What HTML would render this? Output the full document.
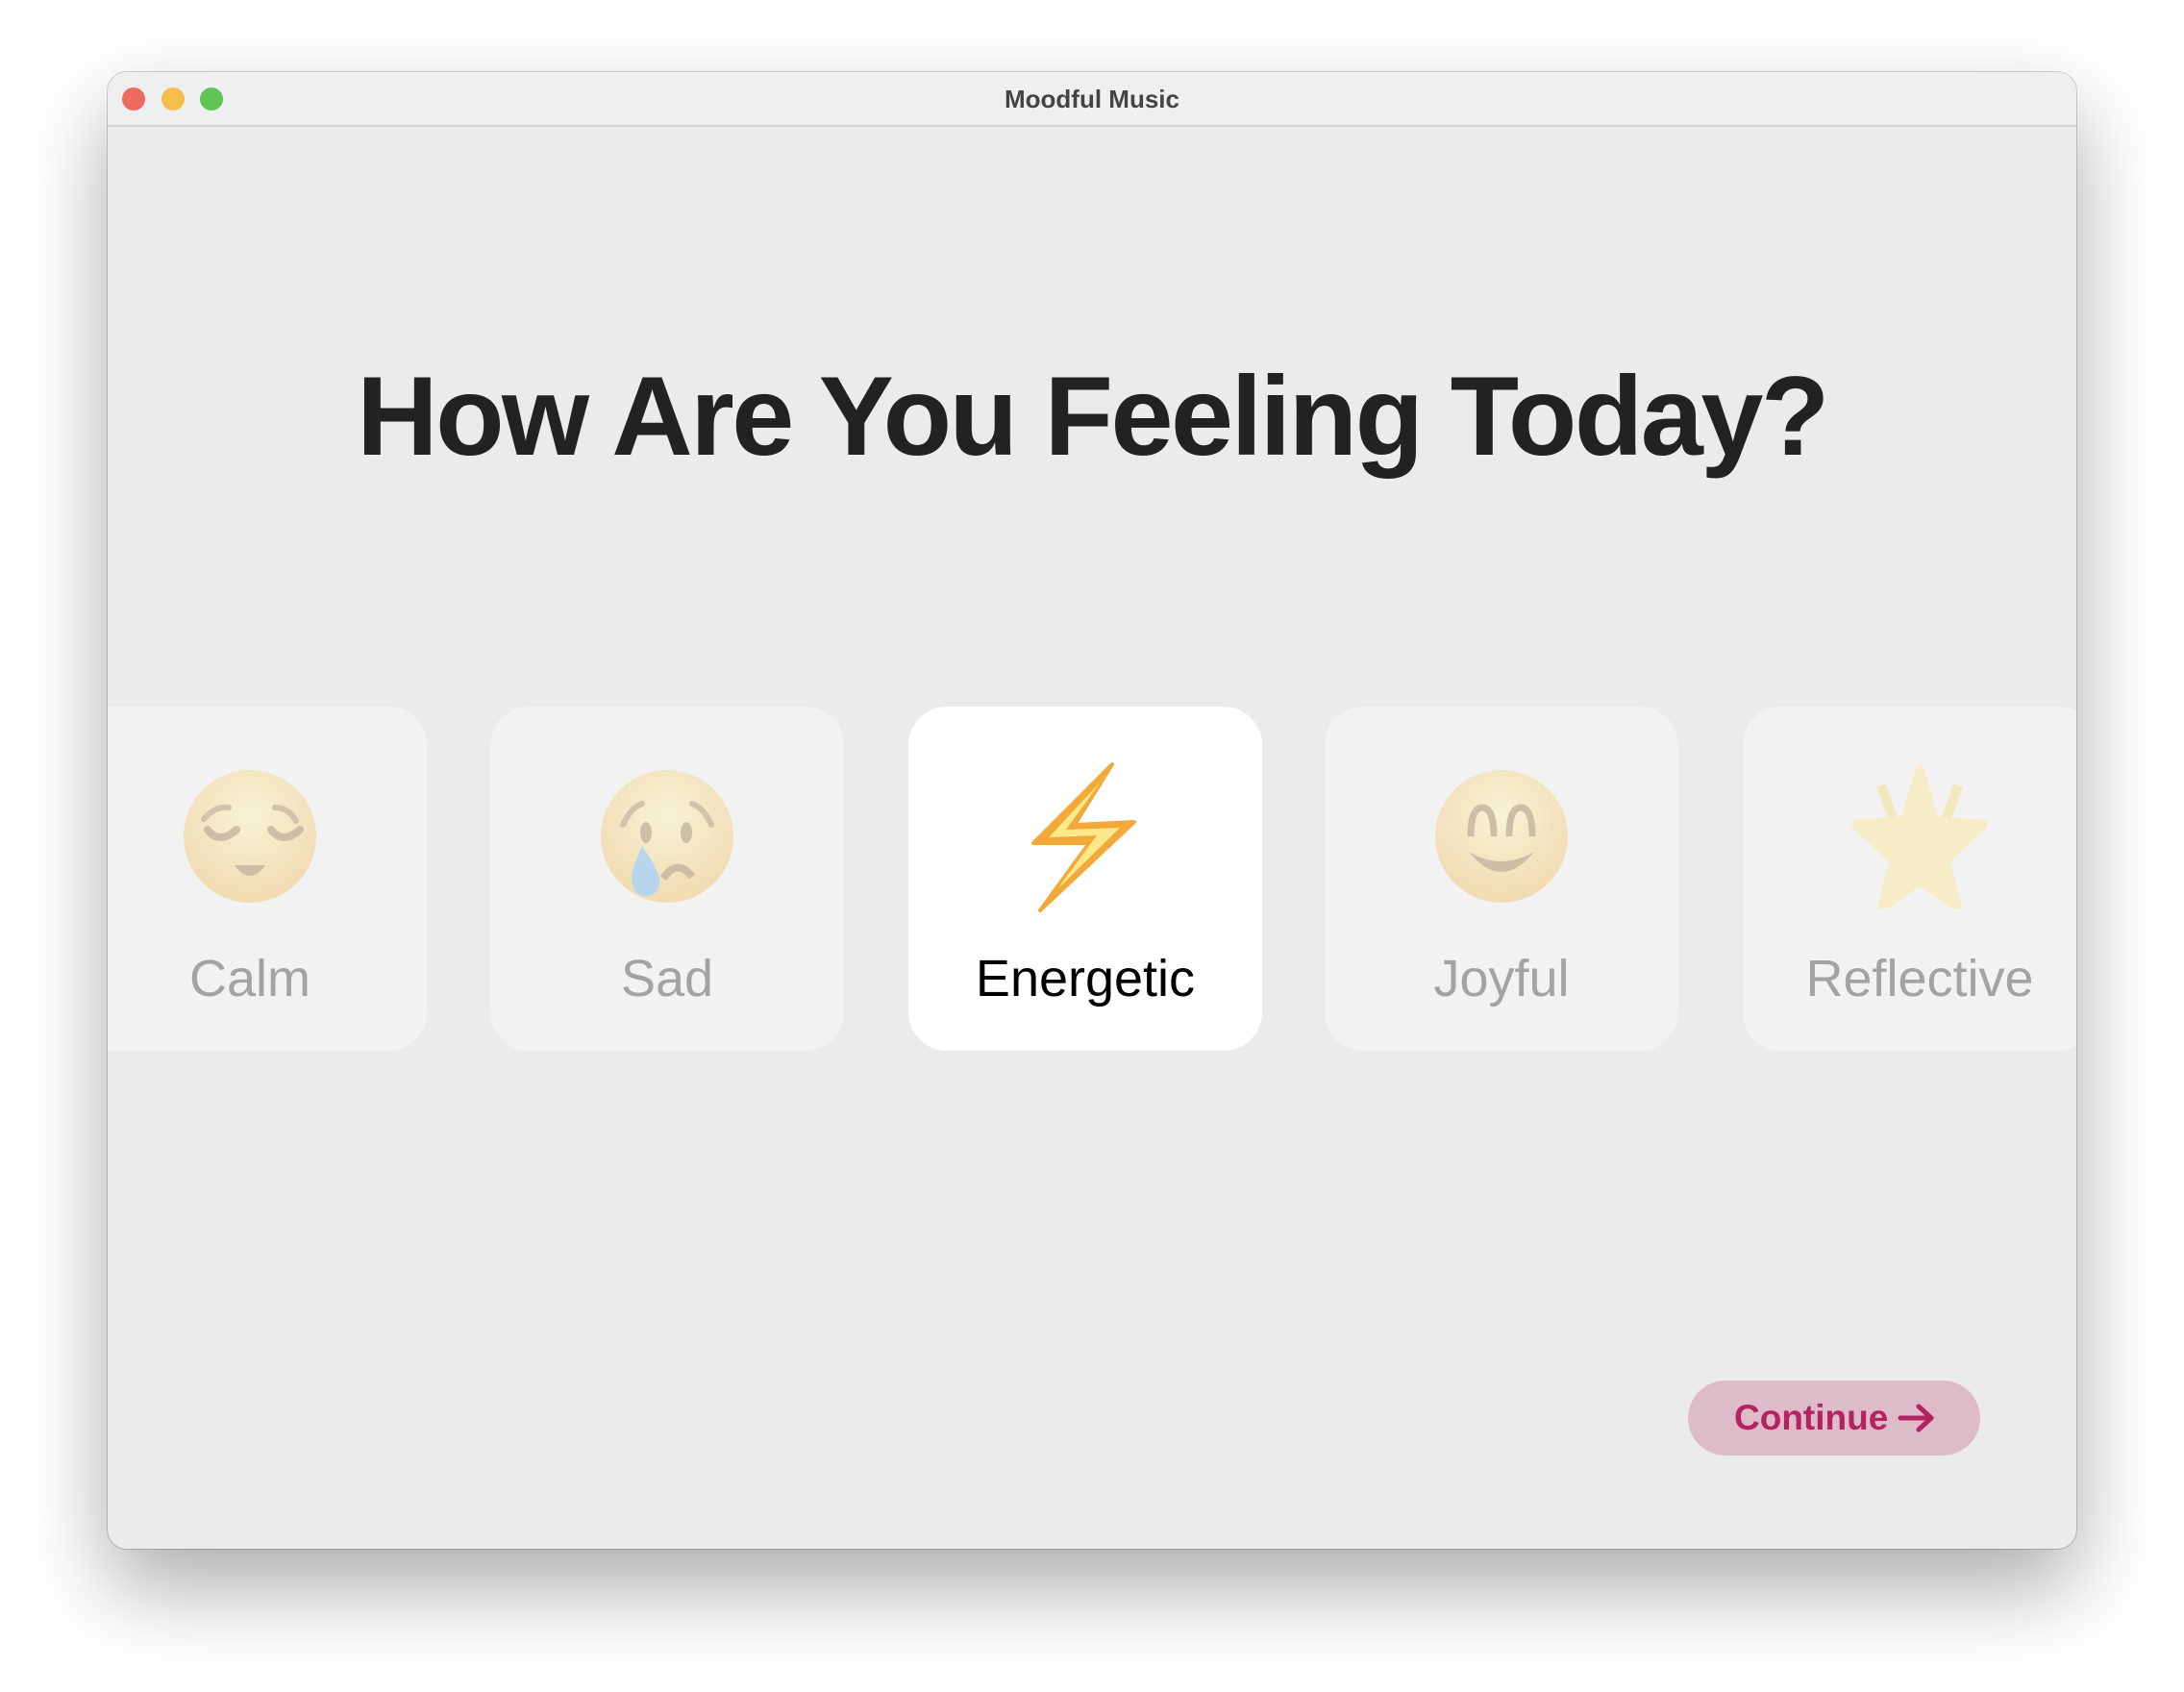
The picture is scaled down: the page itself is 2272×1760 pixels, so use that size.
<!DOCTYPE html>
<html><head><meta charset="utf-8"><style>
*{margin:0;padding:0;box-sizing:border-box}
body{width:2272px;height:1760px;background:#fff;position:relative;overflow:hidden;font-family:"Liberation Sans",sans-serif}
.win{position:absolute;left:112px;top:75px;width:2048px;height:1536px;border-radius:20px;background:#ebebeb;overflow:hidden;box-shadow:0 40px 90px rgba(0,0,0,.33),0 0 0 1px rgba(0,0,0,.18)}
.bar{position:absolute;left:0;top:0;right:0;height:57px;background:#eeeff1;border-bottom:2px solid #d2d2d2}
.dot{position:absolute;top:16px;width:24px;height:24px;border-radius:50%}
.title{position:absolute;left:0;right:0;top:13px;text-align:center;font-size:26px;font-weight:bold;color:#444}
h1{position:absolute;left:0;right:0;top:290px;text-align:center;font-size:117px;font-weight:bold;color:#222;letter-spacing:-2.5px}
.card{position:absolute;top:660px;width:368px;height:358px;border-radius:40px;background:#f2f2f2}
.card .lab{position:absolute;left:0;right:0;top:252px;text-align:center;font-size:54px;color:#a3a3a3}
.card svg{position:absolute;left:114px;top:65px}
.sel{background:#fff}.sel .lab{color:#000}
.btn{position:absolute;left:1644px;top:1361px;width:304px;height:78px;border-radius:39px;background:#debbc8;color:#b3235f;font-size:37px;font-weight:bold;line-height:78px;padding-left:48px}
.btn svg{position:absolute;left:218px;top:24px}
</style></head><body>
<div class="win">
 <div class="bar">
  <div class="dot" style="left:15px;background:#ec6a5e"></div>
  <div class="dot" style="left:56px;background:#f4bf4f"></div>
  <div class="dot" style="left:96px;background:#61c554"></div>
  <div class="title">Moodful Music</div>
 </div>
 <h1>How Are You Feeling Today?</h1>

 <div class="card" style="left:-36px"><svg width="140" height="140" viewBox="0 0 140 140"><defs><radialGradient id="f" cx=".5" cy=".35" r=".6"><stop offset="0" stop-color="#f7f3d6"/><stop offset="1" stop-color="#f1dcb4"/></radialGradient></defs><circle cx="70" cy="70" r="69" fill="url(#f)"/><path d="M22 52q12-14 26-12M96 40q14 0 22 14" stroke="#d2c3ab" stroke-width="6" fill="none" stroke-linecap="round"/><path d="M26 63q12 16 30 0M92 63q12 16 30 0" stroke="#cdbea6" stroke-width="8" fill="none" stroke-linecap="round"/><path d="M54 100q16 22 32 0z" fill="#cdbea6"/></svg><div class="lab">Calm</div></div>

 <div class="card" style="left:398px"><svg width="140" height="140" viewBox="0 0 140 140"><circle cx="70" cy="70" r="69" fill="url(#f)"/><path d="M24 58q8-18 20-22M96 36q12 4 20 22" stroke="#d2c3ab" stroke-width="6" fill="none" stroke-linecap="round"/><ellipse cx="48" cy="66" rx="6" ry="11" fill="#cdbea6"/><ellipse cx="90" cy="66" rx="6" ry="11" fill="#cdbea6"/><path d="M66 114q14-22 30-2" stroke="#cdbea6" stroke-width="8" fill="none"/><path d="M44 80q-14 30-10 40q4 14 16 12q12-2 12-16q0-10-18-36z" fill="#b7d6ee"/></svg><div class="lab">Sad</div></div>

 <div class="card sel" style="left:833px"><svg width="368" height="358" viewBox="0 0 368 358" style="left:0;top:0"><polygon points="212,60 130,142 188,142 137,212 235,120 173,123" fill="#f2a93a" stroke="#f2a93a" stroke-width="4" stroke-linejoin="round"/><polygon points="200,78 146,136 196,134 155,190 220,126 164,128" fill="#fde98a"/></svg><div class="lab">Energetic</div></div>

 <div class="card" style="left:1266px"><svg width="140" height="140" viewBox="0 0 140 140"><circle cx="70" cy="70" r="69" fill="url(#f)"/><path d="M38 70q0-30 12-30q12 0 12 30M78 70q0-30 12-30q12 0 12 30" stroke="#cdbea6" stroke-width="7" fill="none"/><path d="M36 86q34 42 68 0q-34 20-68 0z" fill="#cdbea6"/></svg><div class="lab">Joyful</div></div>

 <div class="card" style="left:1701px"><svg width="140" height="150" viewBox="0 0 140 150" style="top:60px"><polygon points="70,5 86,58 138,62 98,100 110,150 70,122 30,150 42,100 2,62 54,58" fill="#f6edc6" stroke="#f6edc6" stroke-width="8" stroke-linejoin="round"/><path d="M30 22l12 34M110 22l-12 34" stroke="#f3e7bd" stroke-width="10"/></svg><div class="lab">Reflective</div></div>

 <div class="btn">Continue<svg width="40" height="30" viewBox="0 0 40 30"><path d="M3 15h32M22 3l13 12-13 12" stroke="#b3235f" stroke-width="5" fill="none" stroke-linecap="round" stroke-linejoin="round"/></svg></div>
</div>
</body></html>
